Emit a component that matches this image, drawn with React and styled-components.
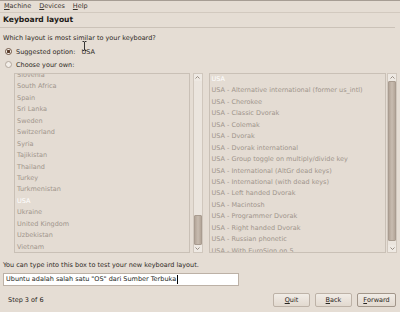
import React from 'react';
import styled, { createGlobalStyle } from 'styled-components';

const countries = [
  'Slovenia', 'South Africa', 'Spain', 'Sri Lanka', 'Sweden', 'Switzerland', 'Syria',
  'Tajikistan', 'Thailand', 'Turkey', 'Turkmenistan', 'USA', 'Ukraine',
  'United Kingdom', 'Uzbekistan', 'Vietnam',
];

const variants = [
  'USA',
  'USA - Alternative international (former us_intl)',
  'USA - Cherokee',
  'USA - Classic Dvorak',
  'USA - Colemak',
  'USA - Dvorak',
  'USA - Dvorak international',
  'USA - Group toggle on multiply/divide key',
  'USA - International (AltGr dead keys)',
  'USA - International (with dead keys)',
  'USA - Left handed Dvorak',
  'USA - Macintosh',
  'USA - Programmer Dvorak',
  'USA - Right handed Dvorak',
  'USA - Russian phonetic',
  'USA - With EuroSign on 5',
];

const App = () => {
  return (
    <Window>
      <GlobalStyle />
      <MenuBar>
        <MenuItem><Mnemonic>M</Mnemonic>achine</MenuItem>
        <MenuItem><Mnemonic>D</Mnemonic>evices</MenuItem>
        <MenuItem><Mnemonic>H</Mnemonic>elp</MenuItem>
      </MenuBar>
      <Header>Keyboard layout</Header>
      <Body>
        <Question>Which layout is most similar to your keyboard?</Question>
        <RadioRow>
          <Radio checked />
          <span>Suggested option:</span>
          <Suggested>USA</Suggested>
        </RadioRow>
        <RadioRow>
          <Radio />
          <span>Choose your own:</span>
        </RadioRow>
        <ListsRow>
          <Pane gap={3}>
            <ListBox>
              <ListInner offset={-4}>
                {countries.map((c) => (
                  <Item key={c} selected={c === 'USA'}>{c}</Item>
                ))}
              </ListInner>
            </ListBox>
            <Scrollbar>
              <Arrow><Chevron up /></Arrow>
              <Track>
                <Thumb top={134} size={30} />
              </Track>
              <Arrow><Chevron /></Arrow>
            </Scrollbar>
          </Pane>
          <Pane gap={1}>
            <ListBox>
              <ListInner offset={0}>
                {variants.map((v) => (
                  <Item key={v} selected={v === 'USA'}>{v}</Item>
                ))}
              </ListInner>
            </ListBox>
            <Scrollbar>
              <Arrow><Chevron up /></Arrow>
              <Track>
                <Thumb top={0} size={160} />
              </Track>
              <Arrow><Chevron /></Arrow>
            </Scrollbar>
          </Pane>
        </ListsRow>
        <Hint>You can type into this box to test your new keyboard layout.</Hint>
        <TextField>
          Ubuntu adalah salah satu "OS" dari Sumber Terbuka<Caret />
        </TextField>
      </Body>
      <Footer>
        <StepText>Step 3 of 6</StepText>
        <Button width={37}><Mnemonic>Q</Mnemonic>uit</Button>
        <Button width={37}><Mnemonic>B</Mnemonic>ack</Button>
        <Button width={39} primary><Mnemonic>F</Mnemonic>orward</Button>
      </Footer>
      <Pointer viewBox="0 0 5 10" width="5" height="10">
        <path d="M0.5 0.5h1.5l0.5 0.5 0.5-0.5h1.5M2.5 1v8M0.5 9.5h1.5l0.5-0.5 0.5 0.5h1.5" stroke="#222" strokeWidth="0.9" fill="none" />
      </Pointer>
    </Window>
  );
};

const Chevron = ({ up }) => (
  <svg width="5" height="3" viewBox="0 0 5 3">
    <path d={up ? 'M0.5 2.5L2.5 0.5L4.5 2.5' : 'M0.5 0.5L2.5 2.5L4.5 0.5'} stroke="#8c8278" strokeWidth="0.9" fill="none" />
  </svg>
);

export default App;

const GlobalStyle = createGlobalStyle`
  html, body {
    margin: 0;
    padding: 0;
    background: #e5ddd4;
  }
  body {
    font-family: "DejaVu Sans", "Liberation Sans", sans-serif;
    font-size: 6.5px;
    color: #2f2a25;
  }
`;

const Window = styled.div`
  position: relative;
  width: 400px;
  height: 312px;
  overflow: hidden;
  display: flex;
  flex-direction: column;
  background: #e5ddd4;
`;

const MenuBar = styled.div`
  height: 11px;
  border-top: 1px solid #a69d94;
  border-bottom: 1px solid #d2c9bf;
  display: flex;
  align-items: center;
  gap: 8px;
  padding-left: 4px;
  color: #3a342e;
`;

const MenuItem = styled.span`
  line-height: 11px;
`;

const Mnemonic = styled.span`
  text-decoration: underline;
`;

const Header = styled.div`
  height: 14px;
  line-height: 14px;
  margin-right: 5px;
  padding-left: 3px;
  border-bottom: 1px solid #cbc2b8;
  font-weight: bold;
  font-size: 7.6px;
  color: #1f1b18;
`;

const Body = styled.div`
  display: flex;
  flex-direction: column;
  padding: 4px 0 0 3px;
`;

const Question = styled.div`
  height: 13px;
  line-height: 13px;
`;

const RadioRow = styled.div`
  height: 13px;
  display: flex;
  align-items: center;
  gap: 3px;
  padding-left: 2px;
`;

const Radio = styled.span`
  box-sizing: border-box;
  width: 7px;
  height: 7px;
  border-radius: 50%;
  margin-right: 1px;
  border: 1px solid ${(p) => (p.checked ? '#6f5443' : '#b3a89d')};
  background: ${(p) => (p.checked ? 'radial-gradient(circle, #5a3d2c 0 1.4px, #f4efe9 1.6px)' : '#f3eee8')};
`;

const Suggested = styled.span`
  margin-left: 3px;
`;

const ListsRow = styled.div`
  display: flex;
  gap: 6px;
  height: 180px;
  margin: 2px 3px 0 11px;
`;

const Pane = styled.div`
  flex: 1;
  display: flex;
  gap: ${(p) => p.gap}px;
`;

const ListBox = styled.div`
  flex: 1;
  border: 1px solid #c9c0b6;
  overflow: hidden;
  background: #e4dcd3;
`;

const ListInner = styled.div`
  margin-top: ${(p) => p.offset}px;
`;

const Item = styled.div`
  height: 11.45px;
  line-height: 11.45px;
  padding-left: 2px;
  white-space: nowrap;
  color: ${(p) => (p.selected ? '#ffffff' : '#9f958c')};
`;

const Scrollbar = styled.div`
  box-sizing: border-box;
  width: 10px;
  display: flex;
  flex-direction: column;
  border: 1px solid #d0c7bd;
  background: #ebe5de;
`;

const Arrow = styled.div`
  height: 7px;
  display: flex;
  align-items: center;
  justify-content: center;
  background: #eee9e3;
`;

const Track = styled.div`
  flex: 1;
  display: flex;
  flex-direction: column;
`;

const Thumb = styled.div`
  margin-top: ${(p) => p.top}px;
  height: ${(p) => p.size}px;
  box-sizing: border-box;
  border: 1px solid #a99c90;
  border-radius: 1px;
  background: linear-gradient(to right, #b4a699, #c8bcb0 50%, #b4a699);
`;

const Hint = styled.div`
  margin-top: 6px;
  height: 12px;
  line-height: 12px;
`;

const TextField = styled.div`
  box-sizing: border-box;
  margin-top: 2px;
  width: 236px;
  height: 13px;
  line-height: 11px;
  padding-left: 2px;
  border: 1px solid #bcb1a6;
  background: #ffffff;
  display: flex;
  align-items: center;
  white-space: nowrap;
  color: #221e1b;
`;

const Caret = styled.span`
  display: inline-block;
  width: 1px;
  height: 9px;
  margin-left: 1px;
  background: #000;
`;

const Footer = styled.div`
  display: flex;
  align-items: center;
  gap: 5px;
  height: 14px;
  margin-top: 7px;
  padding: 0 4px 0 8px;
`;

const StepText = styled.span`
  flex: 1;
  color: #2a2521;
`;

const Button = styled.div`
  box-sizing: border-box;
  width: ${(p) => p.width}px;
  height: 14px;
  display: flex;
  align-items: center;
  justify-content: center;
  border: 1px solid ${(p) => (p.primary ? '#a2968a' : '#bdb2a7')};
  border-radius: 2px;
  background: linear-gradient(#f1ece6, #e2d9cf);
  color: #2a2521;
`;

const Pointer = styled.svg`
  position: absolute;
  left: 82px;
  top: 41px;
`;
